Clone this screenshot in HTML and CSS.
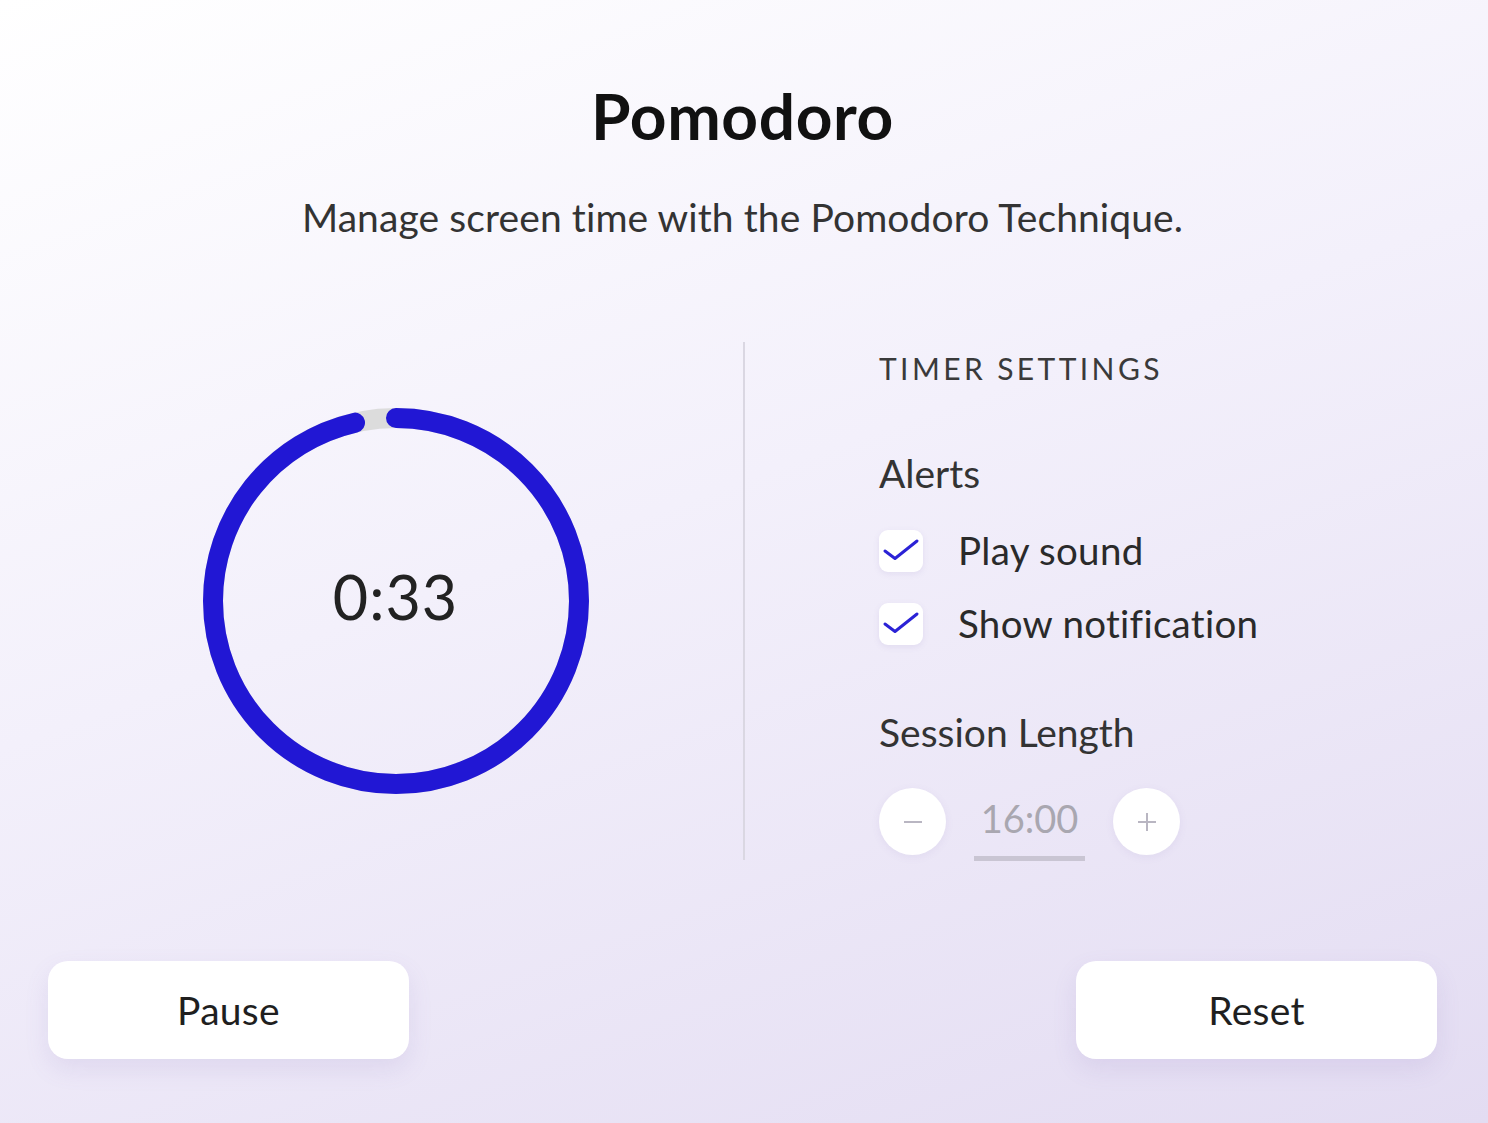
FILE: index.html
```html
<!DOCTYPE html>
<html lang="en">
<head>
<meta charset="utf-8">
<title>Pomodoro</title>
<link rel="stylesheet" href="styles.css">
</head>
<body>
<div class="page">
  <header class="head">
    <h1 class="title">Pomodoro</h1>
    <p class="subtitle">Manage screen time with the Pomodoro Technique.</p>
  </header>
  <main class="main">
    <section class="timer-col">
      <div class="ring">
        <svg class="ring-svg" width="406" height="406" viewBox="0 0 406 406">
          <circle class="track" cx="203" cy="203" r="183"></circle>
          <circle class="progress" cx="203" cy="203" r="183" stroke-dasharray="1108 1200" transform="rotate(-90 203 203)"></circle>
        </svg>
        <span class="time">0:33</span>
      </div>
    </section>
    <div class="divider"></div>
    <section class="settings">
      <h2 class="settings-title">TIMER SETTINGS</h2>
      <h3 class="group-label alerts-label">Alerts</h3>
      <div class="checks">
        <label class="check-row">
          <span class="box"><svg width="44" height="42" viewBox="0 0 44 42"><path d="M6 21 L16 28.5 L38 11" class="tick"/></svg></span>
          <span class="check-text">Play sound</span>
        </label>
        <label class="check-row">
          <span class="box"><svg width="44" height="42" viewBox="0 0 44 42"><path d="M6 21 L16 28.5 L38 11" class="tick"/></svg></span>
          <span class="check-text">Show notification</span>
        </label>
      </div>
      <h3 class="group-label session-label">Session Length</h3>
      <div class="stepper">
        <span class="step"><svg width="22" height="22" viewBox="0 0 22 22"><path d="M2 11 H20" class="step-icon"/></svg></span>
        <span class="value">16:00</span>
        <span class="step"><svg width="22" height="22" viewBox="0 0 22 22"><path d="M2 11 H20 M11 2 V20" class="step-icon"/></svg></span>
      </div>
    </section>
  </main>
  <footer class="actions">
    <button class="btn">Pause</button>
    <button class="btn">Reset</button>
  </footer>
</div>
</body>
</html>
```

FILE: styles.css
```css
* { box-sizing: border-box; }
html, body { margin: 0; padding: 0; }
body {
  font-family: "Lato", "Noto Sans", sans-serif;
  color: #1c1c1c;
  background: linear-gradient(160deg, #ffffff 0%, #f3f0fb 45%, #e3dcf2 100%);
  width: 1488px;
  height: 1123px;
  overflow: hidden;
}
.page {
  height: 1123px;
  display: flex;
  flex-direction: column;
  padding: 0 51px 64px 48px;
}
.head { text-align: center; }
.title {
  margin: 84px 0 0;
  font-size: 64px;
  line-height: 64px;
  font-weight: 700;
  color: #111;
  letter-spacing: 0.6px;
}
.subtitle {
  margin: 50px 0 0;
  font-size: 39px;
  line-height: 39px;
  color: #333;
  letter-spacing: 0.1px;
}
.main {
  margin-top: 105px;
  height: 518px;
  display: flex;
}
.timer-col {
  width: 695px;
  display: flex;
  align-items: center;
  justify-content: center;
}
.ring {
  position: relative;
  width: 406px;
  height: 406px;
}
.ring-svg { display: block; }
.track { fill: none; stroke: #dcdcdc; stroke-width: 20; }
.progress { fill: none; stroke: #2117d4; stroke-width: 20; stroke-linecap: round; }
.time {
  position: absolute;
  inset: 0;
  display: flex;
  align-items: center;
  justify-content: center;
  padding-bottom: 10px;
  font-size: 61px;
  color: #222;
  letter-spacing: 1px;
}
.divider {
  width: 2px;
  background: #dad7e2;
}
.settings {
  padding: 11px 0 0 134px;
  display: flex;
  flex-direction: column;
  align-items: flex-start;
}
.settings-title {
  margin: 0;
  font-size: 30px;
  line-height: 30px;
  font-weight: 400;
  letter-spacing: 3.4px;
  color: #3a3a3a;
}
.group-label {
  margin: 0;
  font-size: 39px;
  line-height: 39px;
  font-weight: 400;
  color: #333;
}
.alerts-label { margin-top: 71px; }
.checks {
  margin-top: 37px;
  display: flex;
  flex-direction: column;
  gap: 31px;
}
.check-row {
  display: flex;
  align-items: center;
  gap: 35px;
  height: 42px;
}
.box {
  width: 44px;
  height: 42px;
  background: #fff;
  border-radius: 9px;
  box-shadow: 0 2px 6px rgba(110, 90, 170, 0.10);
}
.box svg { display: block; }
.tick { fill: none; stroke: #2b22d6; stroke-width: 3; stroke-linecap: round; stroke-linejoin: round; }
.check-text {
  font-size: 38.5px;
  line-height: 39px;
  padding-bottom: 2px;
  color: #2a2a2a;
  letter-spacing: 0.3px;
}
.session-label { margin-top: 68px; }
.stepper {
  margin-top: 36px;
  display: flex;
  align-items: center;
  gap: 28px;
}
.step {
  width: 67px;
  height: 67px;
  border-radius: 50%;
  background: #fff;
  display: flex;
  align-items: center;
  justify-content: center;
  box-shadow: 0 2px 8px rgba(110, 90, 170, 0.08);
}
.step svg { display: block; }
.step-icon { fill: none; stroke: #b9b6c2; stroke-width: 2; }
.value {
  width: 111px;
  padding-bottom: 18px;
  text-align: center;
  font-size: 38px;
  line-height: 40px;
  color: #a9a7b0;
  border-bottom: 5px solid #c9c5d3;
  transform: translateY(8px);
}
.actions {
  margin-top: auto;
  display: flex;
  justify-content: space-between;
}
.btn {
  width: 361px;
  height: 98px;
  border: none;
  border-radius: 20px;
  background: #fff;
  font-family: inherit;
  font-size: 39px;
  color: #1f1f1f;
  box-shadow: 0 10px 24px rgba(120, 100, 180, 0.12);
  letter-spacing: 0.3px;
}
```
